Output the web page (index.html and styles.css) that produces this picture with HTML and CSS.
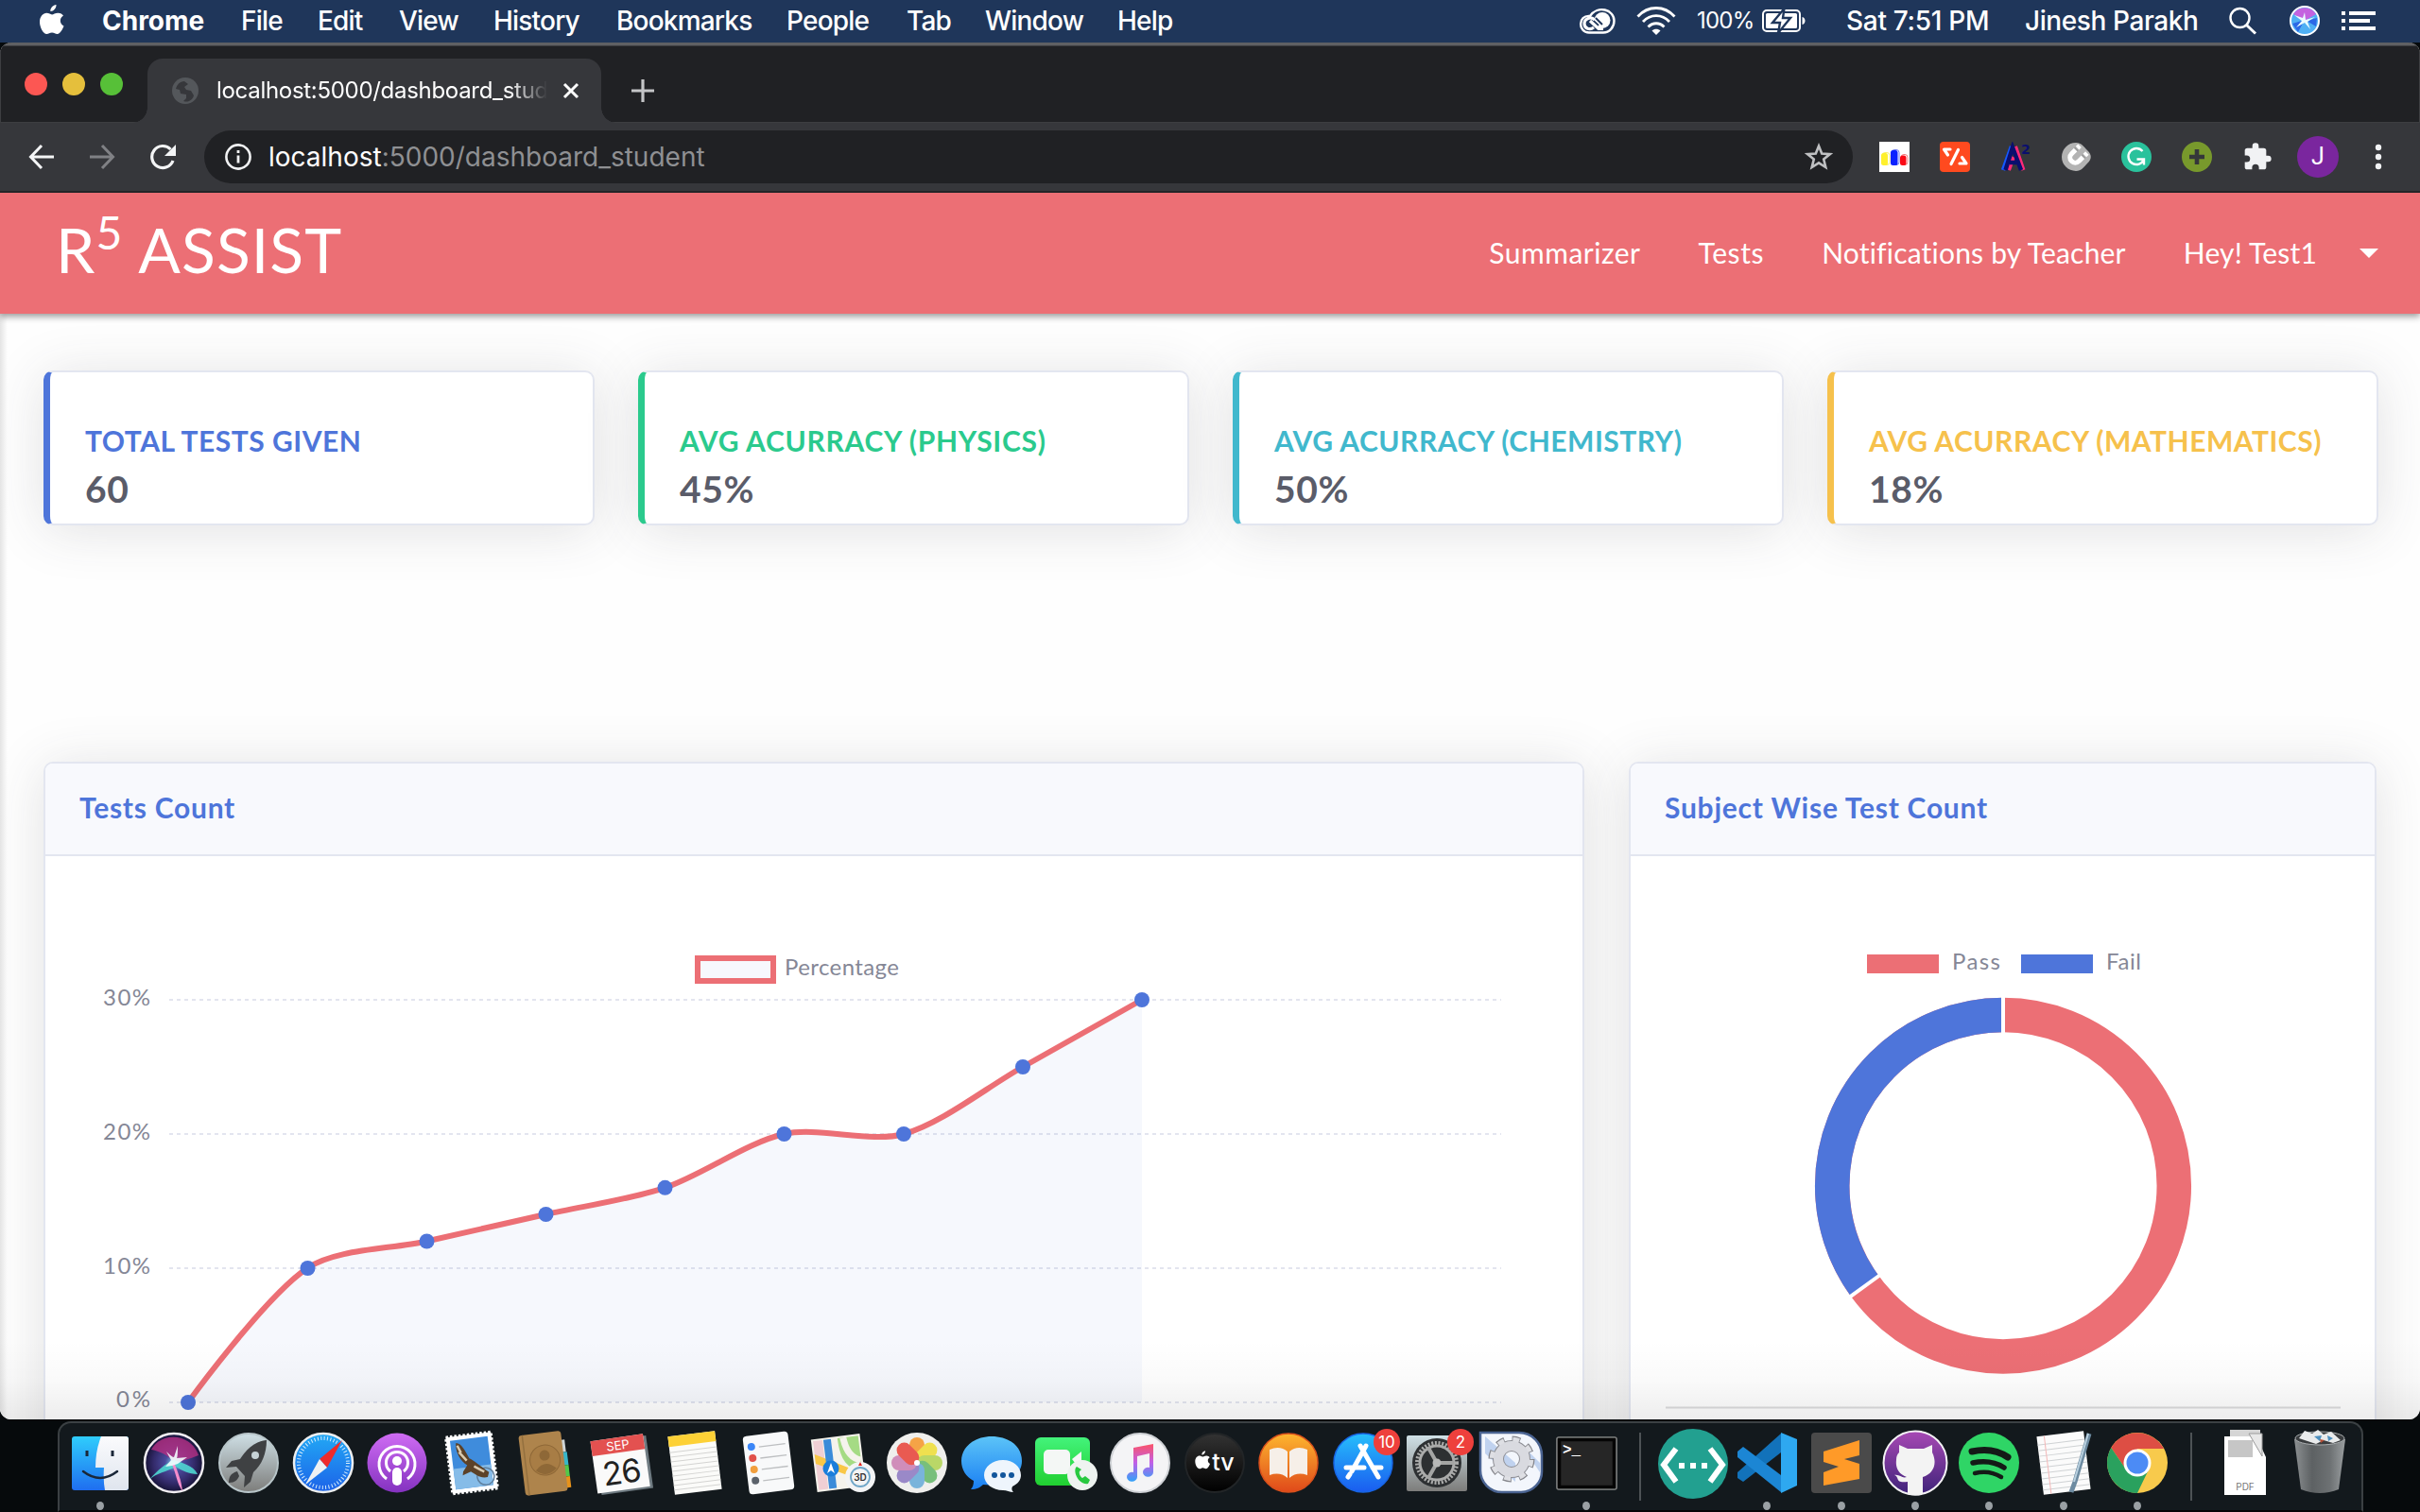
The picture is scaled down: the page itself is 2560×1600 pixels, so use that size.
FILE: index.html
```html
<!DOCTYPE html>
<html lang="en">
<head>
<meta charset="utf-8">
<title>Dashboard</title>
<link rel="stylesheet" href="styles.css">
</head>
<body>
<svg class="defs" width="0" height="0" aria-hidden="true">
  <defs>
    <linearGradient id="gFinder" x1="0" y1="0" x2="0" y2="1"><stop offset="0" stop-color="#2fcdfc"/><stop offset="1" stop-color="#1f6ef0"/></linearGradient>
    <linearGradient id="gPale" x1="0" y1="0" x2="0" y2="1"><stop offset="0" stop-color="#fbfbfd"/><stop offset="1" stop-color="#dfe5ee"/></linearGradient>
    <linearGradient id="gSteel" x1="0" y1="0" x2="0" y2="1"><stop offset="0" stop-color="#cfe0e6"/><stop offset="1" stop-color="#7d7d7b"/></linearGradient>
    <linearGradient id="gPod" x1="0" y1="0" x2="0" y2="1"><stop offset="0" stop-color="#cf6cf3"/><stop offset="1" stop-color="#8432c0"/></linearGradient>
    <linearGradient id="gSafari" x1="0" y1="0" x2="0" y2="1"><stop offset="0" stop-color="#22a9f5"/><stop offset="1" stop-color="#1c62e8"/></linearGradient>
    <linearGradient id="gMsg" x1="0" y1="0" x2="0" y2="1"><stop offset="0" stop-color="#5cc4f8"/><stop offset="1" stop-color="#1a7ff3"/></linearGradient>
    <linearGradient id="gFace" x1="0" y1="0" x2="0" y2="1"><stop offset="0" stop-color="#43f37b"/><stop offset="1" stop-color="#21cf30"/></linearGradient>
    <linearGradient id="gNote" x1="0" y1="0" x2="0" y2="1"><stop offset="0" stop-color="#fb5368"/><stop offset=".5" stop-color="#c05fe8"/><stop offset="1" stop-color="#31a2f8"/></linearGradient>
    <linearGradient id="gBooks" x1="0" y1="0" x2="0" y2="1"><stop offset="0" stop-color="#fdb62f"/><stop offset="1" stop-color="#e0491a"/></linearGradient>
    <linearGradient id="gStore" x1="0" y1="0" x2="0" y2="1"><stop offset="0" stop-color="#27bffb"/><stop offset="1" stop-color="#1a5cf0"/></linearGradient>
    <linearGradient id="gTv" x1="0" y1="0" x2="0" y2="1"><stop offset="0" stop-color="#333"/><stop offset="1" stop-color="#000"/></linearGradient>
    <linearGradient id="gGit" x1="0" y1="0" x2="0" y2="1"><stop offset="0" stop-color="#a749b4"/><stop offset="1" stop-color="#3f237a"/></linearGradient>
    <linearGradient id="gBin" x1="0" y1="0" x2="1" y2="0"><stop offset="0" stop-color="#8c9092"/><stop offset=".35" stop-color="#5d6163"/><stop offset=".7" stop-color="#6d7173"/><stop offset="1" stop-color="#9a9ea0"/></linearGradient>
    <radialGradient id="gSiri"><stop offset="0" stop-color="#7fd8ee"/><stop offset=".3" stop-color="#4a4a9c"/><stop offset=".7" stop-color="#332a6a"/><stop offset="1" stop-color="#161336"/></radialGradient>
    <symbol id="apple" viewBox="0 0 26 32"><path fill="currentColor" d="M18 0c.3 3.500-2.800 7-6.100 7-.4-3.300 2.700-6.700 6.100-7zM25.500 11.500c-4.500 2.700-4 8.800.5 10.900-1 3-3.800 8.400-6.800 8.600-2.200.1-3.100-1.400-5.700-1.400S10 31 7.900 31C4.200 31 .5 23.900.5 18.300c0-6 3.700-9.400 7.300-9.500 2.400 0 4.200 1.600 5.700 1.600 1.400 0 3.800-1.900 6.600-1.700 2.400.1 4.300 1.200 5.400 2.800z"/></symbol>
  </defs>
</svg>

<header class="menubar">
  <svg class="apple" width="27" height="32"><use href="#apple"/></svg>
  <nav class="menus">
    <b>Chrome</b><span>File</span><span>Edit</span><span>View</span><span>History</span><span>Bookmarks</span><span>People</span><span>Tab</span><span>Window</span><span>Help</span>
  </nav>
  <div class="status">
    <svg width="39" height="28" viewBox="0 0 39 28"><path d="M13 26.500H11C-1 26.500-1 7.500 12 9 20-3 37.500 2 37.500 14c0 7-5 12.500-11.500 12.500z" fill="none" stroke="#fff" stroke-width="2.400"/><circle cx="25" cy="13.500" r="8.500" fill="#fff"/><path d="M19 22l-8-8M21 19l-7-6.500" stroke="#1f365a" stroke-width="2"/><path d="M17 13c-4-4-11-1.500-11 4 0 5.500 6 7 10 4M12 14l9 8.500h5" fill="none" stroke="#fff" stroke-width="3.200"/><path d="M18 11l7 7" stroke="#1f365a" stroke-width="2"/></svg>
    <svg width="42" height="30" viewBox="0 0 42 30"><g fill="none" stroke="#fff" stroke-width="2.800"><path d="M1.500 10.500c11-12 28-12 39 0"/><path d="M7 16c8-8.500 20-8.500 28 0"/><path d="M12.500 21.500c5-5 12-5 17 0"/></g><path d="M16.500 25.500c2.500-2.300 6.500-2.300 9 0L21 30z" fill="#fff"/></svg>
    <span class="pct">100%</span>
    <svg width="46" height="26" viewBox="0 0 46 26"><rect x="1" y="2" width="39" height="22" rx="4" fill="none" stroke="#fff" stroke-width="2"/><path d="M42.500 9c4 1 4 7 0 8z" fill="#fff"/><rect x="4" y="5" width="33" height="16" rx="1.500" fill="#fff"/><path d="M23.500 0L11 15h8l-2 11 13-16h-8z" fill="#fff" stroke="#1f365a" stroke-width="2.400"/></svg>
    <span class="clock">Sat 7:51 PM</span>
    <span class="user">Jinesh Parakh</span>
    <svg width="30" height="30" viewBox="0 0 30 30"><g fill="none" stroke="#fff" stroke-width="2.400"><circle cx="11.500" cy="12" r="10"/><path d="M18.500 19.500l9.500 9" stroke-width="3"/></g></svg>
    <svg class="siri" width="32" height="32" viewBox="-16 -16 32 32"><circle r="15" fill="#4fb0f4" stroke="#fff" stroke-width="2"/><path d="M-12-7A14 14 0 0 1 12-7L0 0z" fill="#c463df"/><path d="M-13 3l13-4L-7 12zM2 0l11-3-1 9z" fill="#2b68e6"/><path d="M0-9L1-1l10-3-8 5 3 8-6-7-9 5 6-7-8-6 9 3z" fill="#eafcff"/></svg>
    <svg width="37" height="22" viewBox="0 0 37 22"><path fill="#fff" d="M0 1h4v4H0zM0 9h4v4H0zM0 17h4v4H0zM8 1h28v4H8zM8 9h22v4H8zM8 17h28v4H8z"/></svg>
  </div>
</header>

<main class="window">
  <div class="tabstrip">
    <div class="lights"><i class="red"></i><i class="yellow"></i><i class="green"></i></div>
    <div class="tab">
      <svg width="28" height="28" viewBox="0 0 28 28"><circle cx="14" cy="14" r="14" fill="#54575b"/><path d="M13 4c-5 0-8 4-9 8l4 1 1 4 6 1v4l-3 3c6 2 10-2 11-6l-3-5-5-1-2-3 4-3z" fill="#36373b"/></svg>
      <span class="tab-title">localhost:5000/dashboard_stud</span>
      <svg class="close" width="18" height="18" viewBox="0 0 18 18"><path d="M2 2l14 14M16 2L2 16" stroke="#fff" stroke-width="3"/></svg>
    </div>
    <svg class="plus" width="26" height="26" viewBox="0 0 26 26"><path d="M13 1v24M1 13h24" stroke="#c4c5c7" stroke-width="3.200"/></svg>
  </div>
  <div class="toolbar">
    <div class="navbtns">
      <svg width="28" height="28" viewBox="0 0 28 28"><path d="M27 14H3M14 2L2.500 14 14 26" fill="none" stroke="#f4f5f6" stroke-width="3"/></svg>
      <svg width="28" height="28" viewBox="0 0 28 28"><path d="M1 14h24M14 2l11.500 12L14 26" fill="none" stroke="#808185" stroke-width="3"/></svg>
      <svg width="28" height="28" viewBox="0 0 28 28"><path d="M25 18A11.500 11.500 0 1 1 22.500 6" fill="none" stroke="#f4f5f6" stroke-width="3.200"/><path d="M28 1v12H16z" fill="#f4f5f6"/></svg>
    </div>
    <div class="address">
      <svg width="28" height="28" viewBox="0 0 28 28"><circle cx="14" cy="14" r="12.600" fill="none" stroke="#f1f2f3" stroke-width="2.600"/><path d="M14 12.500v8M14 7v3" stroke="#f1f2f3" stroke-width="2.800"/></svg>
      <span class="url"><em>localhost</em>:5000/dashboard_student</span>
      <svg class="star" width="30" height="30" viewBox="0 0 30 30"><path d="M15 3.500l3.200 8 8.700.6-6.700 5.500 2.100 8.400-7.300-4.600-7.300 4.600 2.100-8.400-6.700-5.500 8.700-.6z" fill="none" stroke="#bfc0c2" stroke-width="2.600"/></svg>
    </div>
    <div class="exts">
      <svg width="32" height="32" viewBox="0 0 32 32"><path fill="#fff" d="M0 0h32v32H0z"/><rect x="3" y="11.500" width="8" height="13" rx="3" fill="#fff" stroke="#f7ee6a"/><rect x="2" y="12" width="7" height="13" rx="2.500" fill="#fff02c"/><rect x="13" y="8.500" width="8" height="16" rx="3" fill="#fff" stroke="#6a78f2"/><rect x="12" y="9" width="7.500" height="16" rx="2.500" fill="#0b21ff"/><rect x="23" y="13.500" width="7" height="11" rx="3" fill="#fff" stroke="#f27a7a"/><rect x="22" y="14.500" width="6.500" height="10.500" rx="2.500" fill="#fb0a15"/></svg>
      <svg width="32" height="32" viewBox="0 0 32 32"><rect width="32" height="32" rx="4" fill="#ff4a1f"/><path d="M11 8H4.500l4 6M19.500 8.500l-7.500 15M23.500 16.500l4.500 6.500h-7" fill="none" stroke="#fff" stroke-width="3.200" stroke-linecap="round" stroke-linejoin="round"/></svg>
      <svg width="32" height="32" viewBox="0 0 32 32"><path d="M3 30L12 5" stroke="#1559ff" stroke-width="4.500" fill="none"/><path d="M9 30l5-14M16 5l8.500 25" stroke="#ff2a78" stroke-width="4" fill="none"/><path d="M5.500 30L13 6l9 24M10 22h10" stroke="#0a0f6e" stroke-width="4.500" fill="none"/><text x="22" y="13" class="sq">2</text></svg>
      <svg width="32" height="32" viewBox="0 0 32 32"><path d="M16 1c6 0 8 4 12 8 5 5 5 9 0 14-4 4-6 8-12 8A15 15 0 0 1 16 1z" fill="#b3b3b3"/><g transform="rotate(45 16 16)"><path d="M10.500 11v6a5.500 5.500 0 0 0 11 0v-6" fill="none" stroke="#fff" stroke-width="5"/><path d="M8 10h5M19 10h5" stroke="#9b9b9b" stroke-width="1.500"/><path d="M8 6.500h5M19 6.500h5" stroke="#fff" stroke-width="3.500"/></g></svg>
      <svg width="32" height="32" viewBox="0 0 32 32"><circle cx="16" cy="16" r="16" fill="#2ac29c"/><path d="M22.500 10a8.500 8.500 0 1 0 1.500 8.500M16.500 18.500H24v6" fill="none" stroke="#fff" stroke-width="2.400"/></svg>
      <svg width="32" height="32" viewBox="0 0 32 32"><circle cx="16" cy="16" r="16" fill="#78992c"/><path d="M16 8v16M8 16h16" stroke="#35363a" stroke-width="4.600"/></svg>
      <svg width="32" height="32" viewBox="0 0 24 24"><path d="M20.500 11H19V7a2 2 0 0 0-2-2h-4V3.500a2.500 2.500 0 0 0-5 0V5H4a2 2 0 0 0-2 2v3.800h1.500a2.700 2.700 0 0 1 0 5.400H2V20a2 2 0 0 0 2 2h3.800v-1.500a2.700 2.700 0 0 1 5.400 0V22H17a2 2 0 0 0 2-2v-4h1.500a2.500 2.500 0 0 0 0-5z" fill="#f1f2f4"/></svg>
    </div>
    <span class="avatar">J</span>
    <svg class="kebab" width="8" height="28" viewBox="0 0 8 28"><g fill="#f1f2f4"><circle cx="4" cy="4" r="3.200"/><circle cx="4" cy="14" r="3.200"/><circle cx="4" cy="24" r="3.200"/></g></svg>
  </div>

  <section class="page">
    <header class="site">
      <h1 class="brand">R<sup>5</sup> ASSIST</h1>
      <nav class="links"><a>Summarizer</a><a>Tests</a><a>Notifications by Teacher</a><a>Hey! Test1</a><i class="caret"></i></nav>
    </header>

    <div class="stats">
      <article class="stat blue"><h2>TOTAL TESTS GIVEN</h2><p>60</p></article>
      <article class="stat green"><h2>AVG ACURRACY (PHYSICS)</h2><p>45%</p></article>
      <article class="stat teal"><h2>AVG ACURRACY (CHEMISTRY)</h2><p>50%</p></article>
      <article class="stat amber"><h2>AVG ACURRACY (MATHEMATICS)</h2><p>18%</p></article>
    </div>

    <div class="charts">
      <article class="panel">
        <h2>Tests Count</h2>
        <svg class="chart" width="1625" height="596" viewBox="48 906 1625 596">
          <rect x="738" y="1014" width="80" height="24" fill="#f7f8fd" stroke="#ec6f75" stroke-width="6"/>
          <text x="830" y="1032" textLength="121">Percentage</text>
          <g text-anchor="end"><text x="159" y="1064" textLength="50">30%</text><text x="159" y="1206" textLength="50">20%</text><text x="159" y="1348" textLength="50">10%</text><text x="159" y="1489" textLength="36">0%</text></g>
          <path d="M179 1058H1588M179 1200H1588M179 1342H1588M179 1484H1588" class="grid"/>
          <path d="M199 1484C199 1484 280 1372.400 325 1342C355.600 1321.300 413.400 1322 451.200 1313.500C489 1305 539.700 1293.500 577.500 1285C615.300 1276.500 667 1269.100 703.500 1256.800C742.500 1243.600 790 1208.900 829.500 1200C865.600 1191.900 920.700 1209.900 956 1200C996.300 1188.600 1044.200 1150.300 1082 1129C1119.800 1107.700 1208 1058 1208 1058V1484Z" fill="#4e73df" fill-opacity=".05"/>
          <path d="M199 1484C199 1484 280 1372.400 325 1342C355.600 1321.300 413.400 1322 451.200 1313.500C489 1305 539.700 1293.500 577.500 1285C615.300 1276.500 667 1269.100 703.500 1256.800C742.500 1243.600 790 1208.900 829.500 1200C865.600 1191.900 920.700 1209.900 956 1200C996.300 1188.600 1044.200 1150.300 1082 1129C1119.800 1107.700 1208 1058 1208 1058" fill="none" stroke="#ec6f75" stroke-width="6"/>
          <g fill="#4e75da"><circle cx="199" cy="1484" r="8"/><circle cx="325.500" cy="1342" r="8"/><circle cx="451.500" cy="1313.500" r="8"/><circle cx="577.500" cy="1285" r="8"/><circle cx="703.500" cy="1256.800" r="8"/><circle cx="829.500" cy="1200" r="8"/><circle cx="956" cy="1200" r="8"/><circle cx="1082" cy="1129" r="8"/><circle cx="1208" cy="1058" r="8"/></g>
        </svg>
      </article>
      <article class="panel">
        <h2>Subject Wise Test Count</h2>
        <svg class="chart" width="787" height="596" viewBox="1725 906 787 596">
          <path fill="#ec6f75" d="M1975 1010h76v20h-76z"/><text x="2065" y="1026" textLength="51">Pass</text>
          <path fill="#4e75da" d="M2138 1010h76v20h-76z"/><text x="2228" y="1026" textLength="37">Fail</text>
          <g fill="none" stroke-width="36.500" transform="rotate(-90 2119 1254.700)"><circle cx="2119" cy="1254.700" r="180.800" stroke="#ec6f75"/><circle cx="2119" cy="1254.700" r="180.800" stroke="#4e75da" pathLength="100" stroke-dasharray="0 65 35"/></g>
          <path d="M2119 1050v50M1990.500 1348l-36 26.200" stroke="#fff" stroke-width="4"/>
          <path d="M1762 1489.500h714" stroke="#dcdcdd" stroke-width="2"/>
        </svg>
      </article>
    </div>
    <div class="dock-shade"></div>
  </section>
</main>

<footer class="dock">
  <div class="app running"><svg viewBox="-40 -40 80 80"><rect x="-30" y="-28" width="60" height="57" rx="3" fill="url(#gFinder)"/><path d="M1-28H27a3 3 0 0 1 3 3V26a3 3 0 0 1-3 3H5Q3 18 4 5H-5Q-5-13 1-28z" fill="url(#gPale)"/><path d="M-14-13v6M13-13v6" stroke="#1a2738" stroke-width="3"/><path d="M-18 9Q0 23 18 9" fill="none" stroke="#1a2738" stroke-width="2.500" stroke-linecap="round"/></svg></div>
  <div class="app"><svg viewBox="-40 -40 80 80"><circle r="31" fill="url(#gSiri)" stroke="#f1eef2" stroke-width="2.500"/><path d="M-24-14C-14-33 18-32 26-8 16-4 8-2 1 0-6-8-14-12-24-14z" fill="#b52f83" opacity=".8"/><path d="M-26 18C-18 8-8 0 0-3 8 0 20 2 25 12 16 12 8 8 2 4-8 10-18 10-26 18z" fill="#4fd6d2" opacity=".9"/><path d="M0-1C4 10 8 18 9 30 3 22 2 10-2 2z" fill="#f48ccb"/><path d="M-8-12Q-2-6 0-6L4-18Q4-6 3-5L14-6 4 1-2 3-9 4-3-3z" fill="#f3fdff" opacity=".9"/></svg></div>
  <div class="app"><svg viewBox="-40 -40 80 80"><circle r="31" fill="url(#gSteel)" stroke="#b8c5c9" stroke-width="2"/><path d="M19-24C5-23-4-12-9-4l-9 2-6 7 11-1 9 10-1 12 7-6 3-10C14 2 19-10 19-24z" fill="#3f4143"/><path d="M-12 9c-7 2-9 6-9 12 7 0 9-3 11-7z" fill="#3f4143"/><circle cx="7" cy="-8" r="4" fill="#c6d2d6"/></svg></div>
  <div class="app"><svg viewBox="-40 -40 80 80"><circle r="31" fill="url(#gSafari)" stroke="#eceeef" stroke-width="2.500"/><circle r="26" fill="none" stroke="#d6edfb" stroke-width="4" stroke-dasharray="1 2.400"/><path d="M20-24L4 5-4-4z" fill="#ee2b2b"/><path d="M-19 23L-4-4 4 5z" fill="#eef1f3"/></svg></div>
  <div class="app"><svg viewBox="-40 -40 80 80"><circle r="31.500" fill="url(#gPod)"/><g fill="none" stroke="#fff" stroke-width="3"><path d="M-11 17A19 19 0 1 1 11 17"/><path d="M-7 9A11.500 11.500 0 1 1 7 9"/></g><circle cy="-2" r="5" fill="#fff"/><rect x="-5" y="5" width="10" height="19" rx="5" fill="#fff"/></svg></div>
  <div class="app"><svg viewBox="-40 -40 80 80"><g transform="rotate(-7)"><rect x="-24" y="-30" width="48" height="60" fill="#fff" stroke="#fff" stroke-width="3" stroke-dasharray="2.500 2"/><rect x="-20" y="-26" width="40" height="52" fill="#3f8cdc"/><path d="M-20 4h40v22h-40z" fill="#86bce8"/><circle cx="13" cy="16" r="9" fill="none" stroke="#5f7f9d" stroke-width="1.500"/><path d="M-14-23C-8-22-5-13-2-5 2-3 7 3 17 12L15 17C7 18 2 12-2 9L-11 12-10 8-5 2C-12-4-16-14-14-23z" fill="#5c4228"/><path d="M-13-20l3 8M-12-13l7 10M2 4l10 7" stroke="#d9cbb0" stroke-width="2.500"/></g></svg></div>
  <div class="app"><svg viewBox="-40 -40 80 80"><g transform="rotate(-7)"><path d="M14-22h9v13h-9z" fill="#cfd5d6"/><path d="M14-9h10V5H14z" fill="#38b6c9"/><path d="M14 5h10v12H14z" fill="#52c84a"/><path d="M14 17h10v12H14z" fill="#e8931b"/><rect x="-25" y="-32" width="45" height="64" rx="3" fill="#ae844c"/><path d="M-21-32v64" stroke="#94703f" stroke-width="1.500"/><circle cx="0" cy="-3" r="16" fill="#a87d45" stroke="#8e6837"/><circle cy="-8" r="5.500" fill="#8e6837"/><path d="M-11 7Q0-5 11 7 0 17-11 7" fill="#8e6837"/></g></svg></div>
  <div class="app"><svg viewBox="-40 -40 80 80"><g transform="rotate(-8)"><path d="M-24-25h55v56h-55z" fill="#6f7b82"/><path d="M-28-27h56v56h-56z" fill="#fafafa"/><path d="M-28-27h56v16h-56z" fill="#e35150"/><text y="-14" class="cal-m">SEP</text><text y="22" class="cal-d">26</text></g></svg></div>
  <div class="app"><svg viewBox="-40 -40 80 80"><g transform="rotate(-7)"><path d="M-25-31h50v62h-50z" fill="#fbfbf9"/><path d="M-25-31h50v11h-50z" fill="#fdd136"/><path d="M-25-14h50M-25-9h50M-25-4h50M-25 1h50M-25 6h50M-25 11h50M-25 16h50M-25 21h50M-25 26h50" stroke="#d4d4d2"/></g></svg></div>
  <div class="app"><svg viewBox="-40 -40 80 80"><g transform="rotate(-7)"><rect x="-24" y="-31" width="48" height="62" rx="4" fill="#f8f9fa"/><circle cx="-16" cy="-19" r="4" fill="#3b86f7"/><circle cx="-16" cy="-7" r="4" fill="#e1524b"/><circle cx="-16" cy="5" r="4" fill="#f19f3e"/><circle cx="-16" cy="17" r="4" fill="#5b626b"/><path d="M-8-18h28M-8-6h28M-8 6h28M-8 18h28" stroke="#bdbfc1" stroke-width="1.300"/></g></svg></div>
  <div class="app"><svg viewBox="-40 -40 80 80"><g transform="translate(-5) rotate(-7)"><rect x="-26" y="-28" width="52" height="56" fill="#f5f3ec"/><path d="M-24-26h10v52h-10z" fill="#f0cfd4"/><path d="M2-26h22V12C8 8 2-4 2-26z" fill="#a5db84"/><path d="M-24-12L24 14v8L-24-2z" fill="#f9c747"/><path d="M-13-26h8v52h-8z" fill="#3a8bd9"/><path d="M8-26Q10-4 24 0" fill="none" stroke="#f5f3ec" stroke-width="7"/></g><circle cx="-13" cy="6" r="8.500" fill="#1a7edb"/><path d="M-13 0l4 11-4-3-4 3z" fill="#fff"/><circle cx="18" cy="15" r="16" fill="#f3f4f5"/><circle cx="18" cy="15" r="10" fill="none" stroke="#6fa6c8" stroke-width="1.800"/><path d="M18-1l2 4h-4z" fill="#e02a22"/><text x="18" y="19" class="m3d">3D</text></svg></div>
  <div class="app"><svg viewBox="-40 -40 80 80"><circle r="32" fill="#efefed"/><g opacity=".88"><rect x="-8" y="-27" width="16" height="27" rx="8" fill="#f6992f"/><rect x="-8" y="-27" width="16" height="27" rx="8" fill="#f0de3a" transform="rotate(45)"/><rect x="-8" y="-27" width="16" height="27" rx="8" fill="#b3d455" transform="rotate(90)"/><rect x="-8" y="-27" width="16" height="27" rx="8" fill="#68b96c" transform="rotate(135)"/><rect x="-8" y="-27" width="16" height="27" rx="8" fill="#69add9" transform="rotate(180)"/><rect x="-8" y="-27" width="16" height="27" rx="8" fill="#8f7cc4" transform="rotate(225)"/><rect x="-8" y="-27" width="16" height="27" rx="8" fill="#cc80b4" transform="rotate(270)"/><rect x="-8" y="-27" width="16" height="27" rx="8" fill="#e9463c" transform="rotate(315)"/></g><circle r="3" fill="#fff"/></svg></div>
  <div class="app"><svg viewBox="-40 -40 80 80"><path d="M0-28C-18-28-32-17-32-2c0 9 5 17 13 21 0 4-1 7-3 9 6 0 10-2 13-5 23 3 41-9 41-25S18-28 0-28z" fill="url(#gMsg)"/><path d="M12-3c-11 0-20 7-20 16s9 16 20 16c4 0 7 2 11 2-2-2-2-4-1-6 6-3 9-7 9-12C31 4 23-3 12-3z" fill="#eef5fc"/><g fill="#12569c"><circle cx="3" cy="13" r="3"/><circle cx="12" cy="13" r="3"/><circle cx="21" cy="13" r="3"/></g></svg></div>
  <div class="app"><svg viewBox="-40 -40 80 80"><rect x="-33" y="-27" width="58" height="51" rx="6" fill="url(#gFace)"/><rect x="-24" y="-14" width="28" height="26" rx="5" fill="#f4f7f5"/><path d="M6-4l10-8V9z" fill="#f4f7f5"/><circle cx="17" cy="13" r="16" fill="#eef3f0"/><path d="M11 4c-5 4 2 20 12 18l2-4-5-4-3 2c-2-1-4-5-3-7l2-2z" fill="#27c93f"/></svg></div>
  <div class="app"><svg viewBox="-40 -40 80 80"><circle r="31" fill="#f4f4f6" stroke="#cfd2d6" stroke-width="2"/><path d="M-7-16L14-20V10a5.500 5 0 1 1-4-5V-10L-3-7V15a5.500 5 0 1 1-4-5z" fill="url(#gNote)"/></svg></div>
  <div class="app"><svg viewBox="-40 -40 80 80"><circle r="31" fill="url(#gTv)" stroke="#222527" stroke-width="2"/><use href="#apple" x="-21" y="-13" width="16" height="20" color="#fff"/><text x="9" y="8" class="tv">tv</text></svg></div>
  <div class="app"><svg viewBox="-40 -40 80 80"><circle r="31" fill="url(#gBooks)" stroke="#d9501b" stroke-width="1.500"/><path d="M-1-12Q-9-19-20-14v27Q-9 9-1 16zM1-12Q9-19 20-14v27Q9 9 1 16z" fill="#f6efe8"/></svg></div>
  <div class="app"><svg viewBox="-40 -40 80 80"><circle r="31" fill="url(#gStore)" stroke="#1765e6" stroke-width="1.500"/><path d="M3-18L-12 9M-3-18L16 15M-18 5H1M10 5h9M-14 12l-2 3" stroke="#fff" stroke-width="5" stroke-linecap="round"/><circle cx="25" cy="-22" r="14" fill="#ee403c"/><text x="25" y="-16" class="badge">10</text></svg></div>
  <div class="app"><svg viewBox="-40 -40 80 80"><rect x="-32" y="-29" width="64" height="59" rx="2" fill="url(#gSteel)"/><circle r="26" fill="#2d3032"/><circle r="21" fill="none" stroke="#aaabaa" stroke-width="4" stroke-dasharray="2 1.700"/><circle r="18" fill="none" stroke="#aaabaa" stroke-width="3"/><path d="M0 0L-9-16M0 0h18M0 0l-9 16" stroke="#a4a5a4" stroke-width="4"/><circle r="4.500" fill="#b7b8b7"/><circle cx="25" cy="-22" r="14" fill="#ee403c"/><text x="25" y="-16" class="badge">2</text></svg></div>
  <div class="app"><svg viewBox="-40 -40 80 80"><path d="M-33-32H8A24 24 0 0 1 32-8V8A22 22 0 0 1 10 31H-10A23 23 0 0 1-33 8z" fill="#f3f6fc" stroke="#4a6391" stroke-width="2.500"/><path d="M-28-28L4 0v20L-28-10zM10-20L30 0v10z" fill="#c0d2ef"/><circle cy="-4" r="20" fill="none" stroke="#85868c" stroke-width="9" stroke-dasharray="8 7.700"/><circle cy="-4" r="14" fill="none" stroke="#8d8e94" stroke-width="12"/><circle cy="-4" r="20" fill="none" stroke="#dedfe4" stroke-width="6.500" stroke-dasharray="6.500 9.200" stroke-dashoffset="-.8"/><circle cy="-4" r="14" fill="none" stroke="#d9dae0" stroke-width="10"/></svg></div>
  <div class="app running"><svg viewBox="-40 -40 80 80"><rect x="-31" y="-27" width="63" height="55" rx="2" fill="#262626" stroke="#8b8d8c" stroke-width="1.600"/><rect x="-28.500" y="-24.500" width="58" height="50" fill="none" stroke="#050505" stroke-width="3.500"/><text x="-25" y="-9" class="term">&gt;_</text></svg></div>
  <i class="sep"></i>
  <div class="app b"><svg viewBox="-40 -40 80 80"><circle cy="1" r="37" fill="#22a090"/><path d="M-18-15L-31 2l13 18M18-15L31 2 18 20" fill="none" stroke="#fff" stroke-width="6"/><path d="M-15 0h6v6h-6zM-3 0h6v6h-6zM9 0h6v6H9z" fill="#fff"/></svg></div>
  <div class="app b running"><svg viewBox="-40 -40 80 80"><path d="M15-31L-31 10v6l6 4L15-11z" fill="#1272ba"/><path d="M-31-12l6-5L15 13v18L-31-6z" fill="#1c86d4"/><path d="M15-32l17 7V24l-17 8z" fill="#2ea8f0"/></svg></div>
  <div class="app b running"><svg viewBox="-40 -40 80 80"><rect x="-32" y="-32" width="64" height="64" rx="4" fill="#4a4a4a"/><path d="M-19-12L19-24v16L3-4l16 5v16L-19 24V10l16-6-16-5z" fill="#ff9a28"/></svg></div>
  <div class="app b running"><svg viewBox="-40 -40 80 80"><circle r="33.500" fill="url(#gGit)" stroke="#f4f2f5" stroke-width="2"/><path d="M-8 33V20c-14 2-8-5-14-7 6-1 8 4 13 2-9-3-12-10-11-18 0-4 1-6 3-8v-8l9 4H9l9-4v8c6 12 1 23-10 26V33Q0 36-8 33z" fill="#f3f3f3"/></svg></div>
  <div class="app b running"><svg viewBox="-40 -40 80 80"><circle r="32" fill="#2fd566"/><g fill="none" stroke="#141a17" stroke-linecap="round"><path d="M-18-12Q4-17 20-6" stroke-width="7"/><path d="M-17 0Q2-4 16 5" stroke-width="5.500"/><path d="M-15 11Q0 7 13 15" stroke-width="4.500"/></g></svg></div>
  <div class="app b running"><svg viewBox="-40 -40 80 80"><g transform="rotate(-7)"><path d="M-25-31h50v62h-50z" fill="#fbfbfb"/><path d="M-25-22h50M-25-16h50M-25-10h50M-25-4h50M-25 2h50M-25 8h50M-25 14h50M-25 20h50M-25 26h50" stroke="#cfd2d4"/><path d="M-17-31v62" stroke="#f3b7b7"/></g><path d="M27-31L12 20 8 31" fill="none" stroke="#6d8ba1" stroke-width="5"/><path d="M26-31L11 20" stroke="#b9d0df" stroke-width="2"/></svg></div>
  <div class="app b running"><svg viewBox="-40 -40 80 80"><circle r="32" fill="#f8ca4c"/><path d="M-27.700-16A32 32 0 0 1 28-15H0L-12 7z" fill="#dd4e44"/><path d="M-27.700-16A32 32 0 0 0 0 32L12 7-12 7z" fill="#2aa15e"/><circle r="14.500" fill="#fff"/><circle r="11.500" fill="#4c8bf5"/></svg></div>
  <i class="sep s2"></i>
  <div class="app b"><svg viewBox="-40 -40 80 80"><path d="M-16-35h32v20h-32z" fill="#d5d5d5"/><path d="M-22-28h34l10 22v40h-44z" fill="#fff"/><path d="M-18-24H8V-6H-18z" fill="#c6c6c6"/><path d="M4-31h14v24z" fill="#e8e8e8" stroke="#9a9a9a"/><text y="29" class="pdf">PDF</text></svg></div>
  <div class="app b"><svg viewBox="-40 -40 80 80"><path d="M-27-25L-20 28Q0 36 20 28L27-25z" fill="url(#gBin)"/><ellipse cy="-26" rx="26" ry="7" fill="#3a3d3f" stroke="#a9adaf"/><path d="M-22-26l6-8 8 3 6-4 6 5 8-3 10 9-8 3-10-3-8 4-9-3z" fill="#e9ebec"/><path d="M-6-28l8-1-2 6zM8-29l6 3-5 3z" fill="#4d8fbd"/><path d="M0-25l5 1-4 3z" fill="#b34d35"/></svg></div>
</footer>
</body>
</html>
```
FILE: styles.css
```css
* { box-sizing: border-box; margin: 0; padding: 0; }
html, body { width: 2560px; height: 1600px; overflow: hidden; }
body {
  display: flex;
  flex-direction: column;
  background: #060a0c;
  font-family: Lato, sans-serif;
}
svg { display: block; flex: none; }
.defs { position: absolute; }

/* System menu bar */
.menubar {
  height: 45px;
  flex: none;
  display: flex;
  align-items: center;
  background: #1f365a;
  color: #fff;
  font: 500 28px/34px Inter, sans-serif;
  letter-spacing: -.8px;
  padding: 0 0 1px 41px;
}
.apple { margin-right: 40px; margin-top: -2px; }
.menus {
  display: grid;
  grid-template-columns: 147px 81px 86px 100px 130px 180px 127px 83px 140px 60px;
  white-space: nowrap;
}
.menus b { font-weight: 700; letter-spacing: 0; }
.status { margin-left: auto; padding-right: 46px; display: flex; align-items: center; white-space: nowrap; }
.status > * + * { margin-left: 22px; }
.status .pct { font-size: 24px; font-weight: 400; width: 61px; margin-left: 22px; }
.status .pct + svg { margin-left: 8px; }
.status .clock { width: 152px; margin-left: 43px; letter-spacing: -.3px; }
.status .user { width: 185px; margin-left: 37px; letter-spacing: -.4px; }
.status .user + svg { margin-left: 31px; }
.status .siri { margin-left: 34px; }
.status .siri + svg { margin-left: 23px; }

/* Browser window */
.window {
  height: 1457px;
  flex: none;
  display: flex;
  flex-direction: column;
  border-radius: 12px;
  overflow: hidden;
  background: #fff;
}
.tabstrip {
  height: 85px;
  flex: none;
  display: flex;
  align-items: flex-end;
  background: #202124;
  border-top: 3px solid #5f6063;
  box-shadow: inset 0 0 0 1px #3d3e41;
}
.lights { display: flex; gap: 16px; width: 156px; padding: 0 0 29px 26px; }
.lights i { width: 24px; height: 24px; border-radius: 50%; }
.red { background: #fc5753; }
.yellow { background: #e5bf3c; }
.green { background: #57c038; }
.tab {
  position: relative;
  width: 480px;
  height: 68px;
  display: flex;
  align-items: center;
  padding: 0 22px 0 26px;
  border-radius: 16px 16px 0 0;
  background: #36373b;
}
.tab::before, .tab::after {
  content: "";
  position: absolute;
  bottom: 0;
  width: 16px;
  height: 16px;
}
.tab::before { left: -16px; background: radial-gradient(circle at 0 0, transparent 15.500px, #36373b 16px); }
.tab::after { right: -16px; background: radial-gradient(circle at 100% 0, transparent 15.500px, #36373b 16px); }
.tab-title {
  width: 351px;
  margin-left: 19px;
  white-space: nowrap;
  color: #fff;
  font: 400 24px/30px Inter, sans-serif;
  letter-spacing: -.3px;
  -webkit-mask-image: linear-gradient(90deg, #000 310px, transparent 350px);
  mask-image: linear-gradient(90deg, #000 310px, transparent 350px);
}
.close { margin-left: 15px; }
.plus { margin: 0 0 21px 31px; }
.toolbar {
  height: 74px;
  flex: none;
  display: flex;
  align-items: center;
  background: #36373b;
  border-bottom: 2px solid #232427;
}
.navbtns { display: flex; gap: 36px; width: 216px; padding-left: 30px; }
.address {
  width: 1744px;
  height: 56px;
  display: flex;
  align-items: center;
  padding: 0 21px 0 22px;
  border-radius: 28px;
  background: #202124;
}
.url { margin-left: 18px; font: 400 28px/34px Inter, sans-serif; color: #8f9093; }
.url em { font-style: normal; color: #fff; }
.star { margin-left: auto; }
.exts { display: flex; gap: 32px; margin-left: 28px; }
.avatar {
  width: 44px;
  height: 44px;
  margin-left: 26px;
  border-radius: 50%;
  background: #7a269e;
  color: #fff;
  font: 400 25px/44px Roboto, sans-serif;
  text-align: center;
}
.kebab { margin-left: 38px; }
.sq { font: 900 14px "DejaVu Sans", sans-serif; fill: #0a0f6e; }

/* Dashboard page */
.page {
  position: relative;
  flex: 1;
  min-height: 0;
  overflow: hidden;
  background: #fefefe;
}
.page::before {
  content: "";
  position: absolute;
  inset: 128px auto 0 0;
  width: 8px;
  background: linear-gradient(90deg, #e4e4e4, rgba(255, 255, 255, 0));
}
.site {
  position: relative;
  height: 128px;
  display: flex;
  align-items: center;
  justify-content: space-between;
  padding: 0 44px 0 59px;
  background: #ec6f75;
  color: #fff;
  box-shadow: 0 3px 7px rgba(0, 0, 0, .4);
}
.brand { font-size: 66px; line-height: 78px; font-weight: 400; letter-spacing: 1.100px; margin-top: -8px; }
.brand sup { font-size: 48px; line-height: 0; vertical-align: 25px; }
.links { display: flex; align-items: center; font-size: 30px; line-height: 36px; letter-spacing: .2px; }
.links a { margin-right: 61px; margin-top: -3px; }
.links a:nth-of-type(1) { letter-spacing: .5px; }
.links a:nth-of-type(2) { letter-spacing: .6px; }
.links a:nth-of-type(4) { margin-right: 45px; }
.caret { border: 10px solid transparent; border-top-color: #fff; border-bottom: 0; }

.stats {
  display: grid;
  grid-template-columns: repeat(4, 583px);
  justify-content: space-between;
  padding: 60px 44px 0 46px;
}
.stat {
  height: 164px;
  padding: 55px 0 0 37px;
  border: 2px solid #e3e6f0;
  border-left: 7px solid;
  border-radius: 10px;
  background: #fff;
  box-shadow: 0 5px 56px rgba(58, 59, 69, .15);
}
.stat h2 { font-size: 30px; line-height: 35px; font-weight: 700; letter-spacing: .5px; white-space: nowrap; }
.stat p { margin-top: 10px; color: #5a5c69; font-size: 39px; line-height: 46px; font-weight: 700; letter-spacing: .6px; }
.blue { border-left-color: #4e75da; color: #4e75da; }
.green.stat { border-left-color: #2bca8d; color: #2bca8d; background: #fff; }
.green h2 { letter-spacing: .7px; }
.teal { border-left-color: #41b8cd; color: #41b8cd; }
.amber { border-left-color: #f6c14c; color: #f6c14c; }

.charts {
  display: grid;
  grid-template-columns: 1630px 791px;
  gap: 47px;
  padding: 250px 46px 0;
}
.panel {
  height: 760px;
  border: 2px solid #e3e6f0;
  border-radius: 10px;
  background: #fff;
  box-shadow: 0 5px 56px rgba(58, 59, 69, .15);
}
.panel h2 {
  height: 98px;
  padding: 29px 36px 0;
  border-bottom: 2px solid #e3e6f0;
  border-radius: 8px 8px 0 0;
  background: #f8f9fd;
  color: #4e75da;
  font-size: 30px;
  line-height: 35px;
  font-weight: 700;
  letter-spacing: .75px;
}
.chart text { font: 400 24px Lato, sans-serif; fill: #858796; }
.grid { stroke: #e3e5ef; stroke-width: 2; stroke-dasharray: 4 4; }
.dock-shade {
  position: absolute;
  inset: auto 0 0 0;
  height: 84px;
  background: linear-gradient(rgba(0, 0, 0, 0), rgba(0, 0, 0, .02) 50%, rgba(0, 0, 0, .07));
}

/* Dock */
.dock {
  width: 2439px;
  height: 96px;
  margin: 2px 0 0 61px;
  flex: none;
  display: flex;
  padding-left: 3.500px;
  border: 2px solid #3b4043;
  border-bottom: 2px solid #050607;
  border-radius: 14px 14px 0 0;
  background: #13191d;
}
.app { width: 78.600px; flex: none; padding-top: 2px; display: flex; flex-direction: column; align-items: center; }
.app.b { width: 78.300px; }
.app svg { width: 80px; height: 80px; overflow: visible; }
.running::after { content: ""; width: 8px; height: 9px; border-radius: 50%; background: #9aa0a4; margin-top: 1px; }
.sep { width: 2px; height: 72px; margin: 10px 16px 0 17px; background: #4d5255; flex: none; }
.s2 { margin: 10px 17px 0; }
.dock text { text-anchor: middle; }
.cal-m { font: 400 13px Inter, sans-serif; fill: #fff; }
.cal-d { font: 400 34px Inter, sans-serif; fill: #222; letter-spacing: -1px; }
.m3d { font: 600 10px Inter, sans-serif; fill: #333; }
.tv { font: 500 25px Inter, sans-serif; fill: #fff; }
.badge { font: 400 17px Inter, sans-serif; fill: #fff; }
.dock .term { font: 700 16px "Liberation Mono", monospace; fill: #fff; text-anchor: start; }
.pdf { font: 400 10px Inter, sans-serif; fill: #777; }
```
